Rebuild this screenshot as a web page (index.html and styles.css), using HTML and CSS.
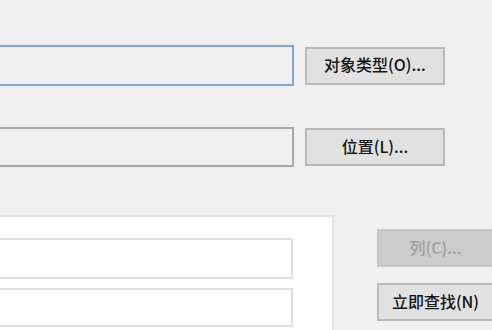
FILE: index.html
```html
<!doctype html>
<html>
<head>
<meta charset="utf-8">
<title>选择用户</title>
<link rel="stylesheet" href="styles.css">
</head>
<body>
	<div class="dialog">
		<div class="row row-type">
			<div class="field focus"></div>
			<button class="btn">对象类型(O)...</button>
		</div>
		<div class="row row-loc">
			<div class="field"></div>
			<button class="btn">位置(L)...</button>
		</div>
		<div class="query">
			<div class="panel">
				<div class="input"></div>
				<div class="input second"></div>
			</div>
			<div class="side">
				<button class="btn wide" disabled>列(C)...</button>
				<button class="btn wide">立即查找(N)</button>
			</div>
		</div>
	</div>
</body>
</html>
```

FILE: styles.css
```css
body{
	margin: 0;
	background: #f0f0f0;
	font-family: "Noto Sans CJK SC", "Liberation Sans", sans-serif;
	overflow: hidden;
}
.dialog{
	width: 492px;
	height: 330px;
	overflow: hidden;
}
.row{
	display: flex;
	align-items: center;
	gap: 11px;
}
.row-type{
	margin-top: 45px;
}
.row-loc{
	margin-top: 41px;
}
.field{
	width: 304px;
	margin-left: -10px;
	height: 41px;
	box-sizing: border-box;
	border: 2px solid #a9a9a9;
	background: #f0f0f0;
}
.field.focus{
	border-color: #80a7d0;
}
.row-loc .field{
	height: 40px;
}
.btn{
	width: 140px;
	height: 38px;
	box-sizing: border-box;
	border: 2px solid #b9b9b9;
	background: #e1e1e1;
	color: #141414;
	font-family: "Noto Sans CJK SC", "Liberation Sans", sans-serif;
	font-size: 16px;
	font-weight: 500;
	padding: 0 0 3px 0;
	flex-shrink: 0;
}
.btn:disabled{
	background: #cccccc;
	border-color: #c6c6c6;
	color: #9f9f9f;
}
.query{
	display: flex;
	margin-top: 48px;
	gap: 43px;
}
.panel{
	width: 344px;
	margin-left: -10px;
	height: 140px;
	box-sizing: border-box;
	background: #fff;
	border: 2px solid #e3e3e3;
	padding: 21px 0 0 0;
	flex-shrink: 0;
}
.input{
	width: 301px;
	height: 41px;
	box-sizing: border-box;
	border: 2px solid #dedede;
	background: #fff;
}
.input.second{
	margin-top: 9px;
	height: 39px;
}
.side{
	display: flex;
	flex-direction: column;
	gap: 16px;
	padding-top: 14px;
}
.btn.wide{
	width: 117px;
}
```
